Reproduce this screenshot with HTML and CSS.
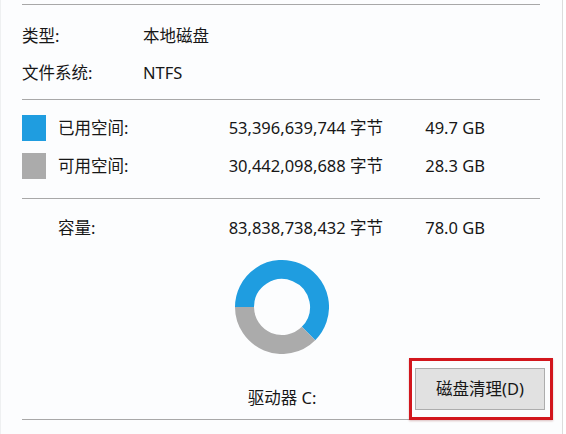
FILE: index.html
```html
<!DOCTYPE html>
<html lang="zh-CN">
<head>
<meta charset="utf-8">
<title>本地磁盘 属性</title>
<link rel="stylesheet" href="styles.css">
</head>
<body>
<div class="panel">
  <div class="content">
    <div class="rule first"></div>
    <div class="info-row"><span>类型:</span><span>本地磁盘</span></div>
    <div class="info-row"><span>文件系统:</span><span>NTFS</span></div>
    <div class="rule second"></div>
    <div class="stat-row used-row">
      <span class="swatch used"></span>
      <span>已用空间:</span>
      <span class="num">53,396,639,744 字节</span>
      <span class="num">49.7 GB</span>
    </div>
    <div class="stat-row">
      <span class="swatch free"></span>
      <span>可用空间:</span>
      <span class="num">30,442,098,688 字节</span>
      <span class="num">28.3 GB</span>
    </div>
    <div class="rule third"></div>
    <div class="stat-row cap-row">
      <span></span>
      <span>容量:</span>
      <span class="num">83,838,738,432 字节</span>
      <span class="num">78.0 GB</span>
    </div>
    <div class="bottom">
      <div class="chart">
        <svg class="donut" width="94" height="94" viewBox="0 0 94 94">
          <path d="M9.5 47 A37.5 37.5 0 1 1 73.52 73.52" fill="none" stroke="#1f9de0" stroke-width="19"/>
          <path d="M73.52 73.52 A37.5 37.5 0 0 1 9.5 47" fill="none" stroke="#ababab" stroke-width="19"/>
        </svg>
        <div class="drive">驱动器 C:</div>
      </div>
      <div class="action">
        <div class="button">磁盘清理(D)</div>
        <div class="highlight"></div>
      </div>
    </div>
    <div class="rule last"></div>
  </div>
</div>
</body>
</html>
```

FILE: styles.css
```css
html, body {
  margin: 0;
  padding: 0;
  background: #ffffff;
}

body {
  font-family: "Noto Sans", "Noto Sans CJK SC", sans-serif;
  font-size: 16.5px;
  color: #171717;
}

.panel {
  width: 563px;
  height: 434px;
  box-sizing: border-box;
  background: #fcfdfe;
  border-right: 1px solid #dcdcdc;
  border-left: 1px solid #eef0f1;
  overflow: hidden;
}

.content {
  margin-left: 21px;
  width: 518px;
}

.rule {
  height: 1px;
  background: #a8a8a8;
}

.rule.first { margin-top: 4px; margin-bottom: 12px; }
.rule.second { margin-top: 8px; margin-bottom: 9px; }
.rule.third { margin-top: 13px; margin-bottom: 14px; }
.rule.last { margin-top: 6px; }

.info-row {
  display: grid;
  grid-template-columns: 121px 1fr;
  height: 37px;
  line-height: 37px;
  white-space: nowrap;
}

.stat-row {
  display: grid;
  grid-template-columns: 36px 146px 179px 102px;
  align-items: center;
  height: 38px;
  line-height: 38px;
  white-space: nowrap;
}

.stat-row.cap-row {
  height: 30px;
  line-height: 30px;
}

.num {
  text-align: right;
}

.swatch {
  display: block;
  width: 24px;
  height: 26px;
}

.swatch.used { background: #1f9de0; }
.swatch.free { background: #ababab; }

.bottom {
  display: flex;
  align-items: flex-end;
}

.chart {
  flex: 0 0 180px;
  width: 180px;
  margin-left: 170px;
  display: flex;
  flex-direction: column;
  align-items: center;
  padding-top: 17px;
}

.donut {
  display: block;
}

.drive {
  margin-top: 28px;
  height: 31px;
  line-height: 31px;
  white-space: nowrap;
}

.action {
  flex: 0 0 auto;
  position: relative;
  margin-left: 43px;
  margin-bottom: 3px;
}

.button {
  width: 130px;
  height: 42px;
  box-sizing: border-box;
  background: #e1e1e1;
  border: 1px solid #adadad;
  text-align: center;
  line-height: 40px;
  white-space: nowrap;
}

.highlight {
  position: absolute;
  left: -6px;
  top: -10px;
  right: -8px;
  bottom: -10px;
  border: 3px solid #d2161d;
  box-shadow: 0 1px 2px rgba(120, 0, 0, 0.25);
  pointer-events: none;
}
```
